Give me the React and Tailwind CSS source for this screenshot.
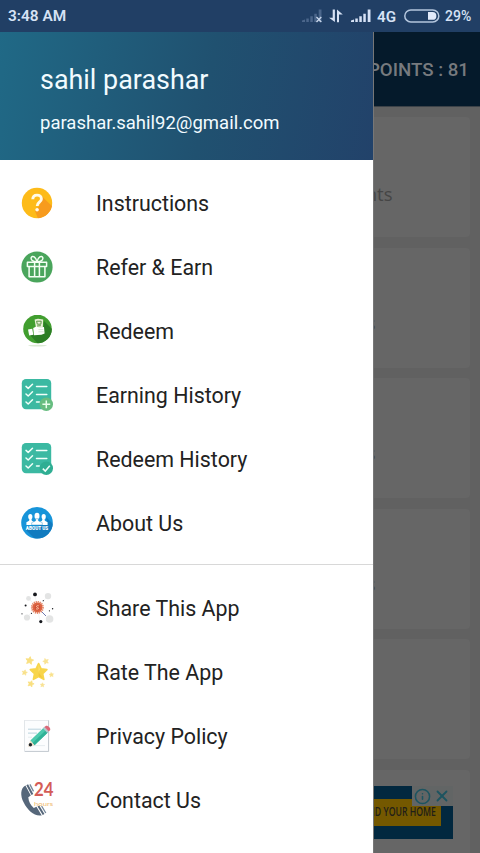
import { X, Info } from 'lucide-react'

function IconInstructions() {
  return (
    <svg viewBox="0 0 32 32" className="size-8">
      <defs>
        <clipPath id="help-disc">
          <circle cx="16" cy="16" r="15.2" />
        </clipPath>
      </defs>
      <circle cx="16" cy="16" r="15.2" fill="#fdbb19" />
      <path d="M20.5 9 34 22v12H18l-4-10 5-6z" fill="#f79b1e" clipPath="url(#help-disc)" />
      <path
        d="M11.8 12.3c0-2.6 1.8-4.2 4.3-4.2s4.3 1.5 4.3 3.8c0 3.3-4.2 3.3-4.2 7"
        fill="none"
        stroke="#fffbe8"
        strokeWidth="2.9"
      />
      <circle cx="16.1" cy="22.8" r="1.8" fill="#fffbe8" />
    </svg>
  )
}

function IconGift() {
  return (
    <svg viewBox="0 0 32 32" className="size-8">
      <circle cx="16" cy="16" r="15.6" fill="#4aa55c" />
      <g fill="none" stroke="#f4fff4" strokeWidth="1.5" strokeLinejoin="round">
        <path d="M6.4 11.2h19.2v4.4H6.4zM8.1 15.6h15.8v10.2H8.1zM13.6 11.2v14.6M18.4 11.2v14.6" />
        <path d="M16 11C12 10.8 9.3 9 10.2 6.5c1.2-2.4 4.9-.8 5.8 4.5zM16 11c4-.2 6.7-2 5.8-4.5-1.2-2.4-4.9-.8-5.8 4.5z" />
      </g>
    </svg>
  )
}

function IconRedeem() {
  return (
    <svg viewBox="0 0 32 32" className="size-8">
      <defs>
        <clipPath id="redeem-disc">
          <circle cx="16.5" cy="14" r="14.3" />
        </clipPath>
      </defs>
      <ellipse cx="16.5" cy="30.6" rx="9.5" ry="0.8" fill="#dce9d6" />
      <circle cx="16.5" cy="14" r="14.3" fill="#419e2f" />
      <path d="m23 6 10 10v14H18l-9-10 13-3z" fill="#2c7e25" clipPath="url(#redeem-disc)" />
      {/* banknotes */}
      <path d="m13.6 4.6 3.4-.8 5.2.8-.4 8-6.8.6z" fill="#e7f0d6" />
      <path d="M15.6 6.2h4.6l-.3 3h-3.6zM16 11l3.8-.3" fill="none" stroke="#5c9346" strokeWidth="1" />
      {/* fist and cuff */}
      <path d="m12.2 13 3.2-1.6 2.4 1 5.2-.4.6 6.4-3.2 1.4-7.4.4z" fill="#fff" />
      <path d="m7 14.6 4.2-.9 1.2 6-4.2.9z" fill="#fff" />
      <path d="M17.4 16.8h5.4M17.4 14.6h5" stroke="#b6ceb0" strokeWidth=".5" />
    </svg>
  )
}

function IconChecklist({ badge }) {
  return (
    <svg viewBox="0 0 32 32" className="size-8">
      <rect x="0.8" y="0" width="29.4" height="30.2" rx="4.2" fill="#3bb9a2" />
      <g fill="none" stroke="#f0fff9" strokeWidth="1.5" strokeLinecap="round" strokeLinejoin="round">
        <path d="m5 7.4 2.2 2 4.3-4.2M5 15l2.2 2 4.3-4.2M5 23l2.2 2 4.3-4.2M15.5 7.5h10.3M15.5 15.5h10.3M15.5 23h2.8" />
      </g>
      {badge === 'plus' ? (
        <>
          <circle cx="25.3" cy="25.3" r="6.7" fill="#67bd80" />
          <path d="M25.3 21.4v7.8M21.4 25.3h7.8" stroke="#eaffed" strokeWidth="1.5" />
        </>
      ) : (
        <>
          <circle cx="25.3" cy="25.3" r="6.7" fill="#2fae93" />
          <path d="m21.8 25.6 2.5 2.5 4.5-5.3" fill="none" stroke="#f0fff9" strokeWidth="1.5" />
        </>
      )}
    </svg>
  )
}

function IconAbout() {
  return (
    <svg viewBox="0 0 32 32" className="size-8">
      <defs>
        <clipPath id="about-disc">
          <circle cx="16" cy="15.8" r="15.8" />
        </clipPath>
      </defs>
      <circle cx="16" cy="15.8" r="15.8" fill="#1794d9" />
      <path d="m25 10 9 9v15H16L5 23l21-7z" fill="#117bbf" clipPath="url(#about-disc)" />
      <g fill="#fff">
        <ellipse cx="9.3" cy="9.8" rx="2.1" ry="2.7" />
        <ellipse cx="22.7" cy="9.8" rx="2.1" ry="2.7" />
        <path d="M5.4 18v-2.7l2.7-1.5.4-2h1.8l.6 2 2 1V18zM19 18v-3.2l2-1 .6-2h1.8l.5 2 2.7 1.5V18z" />
        <ellipse cx="16" cy="9" rx="2.5" ry="3.2" />
        <path d="M10.7 18v-2.3l4-2v-2h2.6v2l4 2V18z" stroke="#1487ca" strokeWidth=".4" />
      </g>
      <text
        x="16"
        y="23.4"
        textAnchor="middle"
        textLength="22.5"
        lengthAdjust="spacingAndGlyphs"
        fontFamily="Roboto, sans-serif"
        fontSize="5.3"
        fontWeight="900"
        fill="#fff"
      >
        ABOUT US
      </text>
    </svg>
  )
}

function IconShare() {
  return (
    <svg viewBox="0 0 32 32" className="size-8 overflow-visible">
      <g stroke="#e6e6e9" strokeWidth=".4">
        <path d="m16 15 10-10M16 15 5 26M16 15 8 7M16 15 14 3M16 15l3 14" />
      </g>
      <path d="m20 19 5 5" stroke="#6e78ad" strokeWidth="1" />
      <g fill="#e3e4e4">
        <circle cx="27" cy="4.1" r="3.2" />
        <circle cx="7.5" cy="6.4" r="2.4" />
        <circle cx="6" cy="25.5" r="3.1" />
        <circle cx="28.6" cy="27" r="3.8" />
      </g>
      <g fill="#16181d">
        <circle cx="14" cy="2.4" r="1.9" />
        <circle cx="19.8" cy="29.6" r="1.6" />
        <circle cx="4.6" cy="13.4" r="1" />
        <circle cx="1" cy="21.8" r=".6" />
        <circle cx="31.6" cy="16.8" r=".7" />
        <circle cx="28.4" cy="18.8" r=".6" />
        <circle cx="22.3" cy="8.7" r=".6" />
        <circle cx="10.5" cy="21.3" r=".6" />
      </g>
      <circle cx="16.4" cy="15.4" r="5.6" fill="none" stroke="#e58666" strokeWidth="1.8" strokeDasharray="1.2 .8" />
      <circle cx="16.4" cy="15.4" r="5" fill="#dd6543" />
      <circle cx="16.4" cy="15.4" r="2.9" fill="#cf4f35" />
      <path d="M17.8 13.9c-2.6-1-2.9 1.1-1.4 1.5 2 .5 1.4 2.3-1.4 1.4" fill="none" stroke="#ffc5a6" strokeWidth="1" />
    </svg>
  )
}

const STARS = [
  { x: 17.6, y: 16.2, s: 8.6, r: 0, fill: '#f8d54a' },
  { x: 8.6, y: 4.6, s: 4, r: 10, fill: '#f9df80' },
  { x: 24.8, y: 5.3, s: 3, r: -18, fill: '#f9e292' },
  { x: 3.6, y: 16.6, s: 2.8, r: 12, fill: '#f9e18a' },
  { x: 30.4, y: 18.8, s: 2.4, r: -8, fill: '#f9e18a' },
  { x: 9.8, y: 27.8, s: 3.3, r: 18, fill: '#f9df80' },
  { x: 21.4, y: 29, s: 2.3, r: 4, fill: '#f9e292' },
]

function IconStars() {
  return (
    <svg viewBox="0 0 32 32" className="size-8 overflow-visible">
      {STARS.map((star) => (
        <path
          key={`${star.x}-${star.y}`}
          d="m0-1 .29.62.67.08-.49.46.13.67L0 .5l-.6.33.13-.67-.49-.46.67-.08z"
          transform={`translate(${star.x} ${star.y}) rotate(${star.r}) scale(${star.s})`}
          fill={star.fill}
          stroke={star.fill}
          strokeWidth=".2"
          strokeLinejoin="round"
        />
      ))}
      <path d="m17.6 8.8 1.2 4.6-1.2 2.6z" fill="#fbe27a" />
      <path d="m17.6 16.6 4.4 5.6-4.4-1.9z" fill="#f2c73e" />
    </svg>
  )
}

function IconPolicy() {
  return (
    <svg viewBox="0 0 32 32" className="size-8">
      <path d="M3.5.3h24.2v31.2H3.5z" fill="#fcfdfe" stroke="#d6dbdf" strokeWidth=".7" />
      <path d="M27.5.5v30.9H4" fill="none" stroke="#b7bfc5" strokeWidth=".7" />
      <path d="M7 9.2h13M7 13.1h9" stroke="#a9c9d6" strokeWidth=".8" />
      <path d="M7 17.2h4M7 25.6h17" stroke="#dde5ea" strokeWidth=".7" />
      <path d="m9.3 20.6 13.6-13 4.2 4.6-13.6 13z" fill="#4cc9ad" />
      <path d="m11.6 23 13.5-13 2 2.2-13.6 13z" fill="#2fb297" />
      <path d="m22 8.3 1.6-1.5 4.3 4.5-1.6 1.6z" fill="#b5c6cd" />
      <path d="m23.4 7 1.3-1.1c1.9-.9 5.1 2 4.5 4l-1.4 1.5z" fill="#db6878" />
      <path d="m9.3 20.6-2.3 6.2 6.5-1.6z" fill="#f0dcc0" />
      <circle cx="9.4" cy="24.8" r="1.7" fill="#20262c" />
    </svg>
  )
}

function IconContact() {
  return (
    <svg viewBox="0 0 32 32" className="size-8 overflow-visible">
      <path
        d="M4.4 1.4C-.6 4-.9 11.600 2.700 18.600c4 8 10.800 14.200 18 12.800l-5.200-8.600-2.700 1.200C9.600 21.600 7.600 17.600 7.300 13.300L9.800 11.400z"
        fill="#56677a"
      />
      <path d="m6.200.8 5.200 9.600M17.400 22l5.200 8.600" stroke="#56677a" strokeWidth="2" />
      <path d="m8.900.4 3.600 7M20.600 22l4.200 7" stroke="#75879a" strokeWidth="1.300" />
      <text
        x="13"
        y="12.300"
        textLength="19.500"
        lengthAdjust="spacingAndGlyphs"
        fontFamily="Lato, sans-serif"
        fontSize="18"
        fontWeight="700"
        fill="#d45c57"
      >
        24
      </text>
      <text
        x="13"
        y="22"
        textLength="19"
        lengthAdjust="spacingAndGlyphs"
        fontFamily="Lato, sans-serif"
        fontSize="6"
        fill="#efb96c"
      >
        hours
      </text>
    </svg>
  )
}

const MAIN_ITEMS = [
  { label: 'Instructions', icon: <IconInstructions /> },
  { label: 'Refer & Earn', icon: <IconGift /> },
  { label: 'Redeem', icon: <IconRedeem /> },
  { label: 'Earning History', icon: <IconChecklist badge="plus" /> },
  { label: 'Redeem History', icon: <IconChecklist badge="check" /> },
  { label: 'About Us', icon: <IconAbout /> },
]

const MORE_ITEMS = [
  { label: 'Share This App', icon: <IconShare /> },
  { label: 'Rate The App', icon: <IconStars /> },
  { label: 'Privacy Policy', icon: <IconPolicy /> },
  { label: 'Contact Us', icon: <IconContact /> },
]

function SignalBars({ dim }) {
  return (
    <svg viewBox="0 0 21 14" className="h-3.5 w-[21px]">
      <path
        d="M0 13v-1.5l3-1V13zM4.3 13V9.5h2.5V13zM8.3 13V7.2h2.5V13zM12.3 13V4.7h2.5V13zM16.7 13V.5h2.8V13z"
        fill={dim ? '#4b668b' : '#d6e2f5'}
      />
      {dim && <path d="m14.5 8 4.8 5m0-5-4.8 5" stroke="#cbd9ed" strokeWidth="1.3" />}
    </svg>
  )
}

function StatusBar() {
  return (
    <div className="flex h-8 shrink-0 items-center bg-[#213f65] pr-[9px] pl-2 text-[#d6e2f5]">
      <span className="pt-[2px] text-[15.4px] font-semibold">3:48 AM</span>
      <div className="ml-auto flex items-center text-[15px] font-semibold">
        <SignalBars dim />
        <svg viewBox="0 0 14 14" className="ml-[6px] h-3.5 w-3.5" fill="#d6e2f5">
          <path d="M3.7.5h2.2V13L0 8.7h3.7zM8 13.3V.5l5.8 5H10v7.8z" />
        </svg>
        <span className="ml-[8px] flex">
          <SignalBars />
        </span>
        <span className="ml-[5px] w-[19px] pt-[2px] text-[15.2px]">4G</span>
        <svg viewBox="0 0 36 14" className="ml-[8px] h-3.5 w-9">
          <rect x=".8" y=".9" width="34" height="12" rx="6" fill="none" stroke="#b4c6dd" strokeWidth="1.5" />
          <path d="M24 3h4.5a3.9 3.9 0 0 1 0 7.8H24z" fill="#e1eafa" />
        </svg>
        <span className="ml-[5px] w-[26px] pt-px text-[14px] font-medium whitespace-nowrap">29%</span>
      </div>
    </div>
  )
}

function MenuItem({ label, icon }) {
  return (
    <button type="button" className="flex h-16 w-full items-center pl-[21px] text-left">
      {icon}
      <span className="ml-[43px] pt-[2px] text-[21.4px] leading-none text-[#222]">{label}</span>
    </button>
  )
}

function Drawer() {
  return (
    <aside className="absolute inset-y-0 left-0 flex w-[373px] flex-col bg-white shadow-[1px_0_0_#777]">
      <div className="flex h-32 shrink-0 flex-col bg-linear-[100deg,#206986,#205170_55%,#22426a] pt-[32px] pl-10 text-[#f2fbff]">
        <span className="text-[26.9px] leading-8">sahil parashar</span>
        <span className="mt-[15px] text-[18.5px] leading-6">parashar.sahil92@gmail.com</span>
      </div>
      <nav className="mt-[11px] flex flex-col">
        {MAIN_ITEMS.map((item) => (
          <MenuItem key={item.label} {...item} />
        ))}
      </nav>
      <div className="mt-[9px] h-px shrink-0 bg-[#d8d8d8]" />
      <nav className="mt-[11px] flex flex-col">
        {MORE_ITEMS.map((item) => (
          <MenuItem key={item.label} {...item} />
        ))}
      </nav>
    </aside>
  )
}

const CARDS = [
  { text: 'Earn Points', inset: 'pr-[77px] pt-[65px]' },
  { text: 'Points', inset: 'pr-[94px] pt-[63px]' },
  { text: 'Points', inset: 'pr-[94px] pt-[63px]' },
  { text: 'Points', inset: 'pr-[94px] pt-[63px]' },
  { text: '', inset: '' },
  { text: '', inset: '' },
]

// Page behind the open drawer, in its dimmed colours
function HomePage() {
  return (
    <div className="flex h-full flex-col bg-[#616161]">
      <header className="flex h-[75px] shrink-0 items-center justify-end border-b border-[#3c4248] bg-[#051a2b] pt-[3px] pr-[11px] text-[18.7px] font-medium text-[#777a7e]">
        POINTS : 81
      </header>
      <div className="flex flex-1 flex-col gap-[10.6px] overflow-hidden pt-[10px] pr-[10.5px] pl-[10.5px]">
        {CARDS.map((card, i) => (
          <div
            key={i}
            className={`h-[120px] shrink-0 rounded-[4px] bg-[#666] text-right font-['Open_Sans'] text-[18.5px] leading-6 text-[#454545] ${card.inset}`}
          >
            {card.text}
          </div>
        ))}
      </div>
    </div>
  )
}

function AdBanner() {
  return (
    <div className="absolute right-[27px] bottom-[14px] flex h-[53px] w-[427px] items-center justify-end bg-[#02283f] pr-3">
      <div className="flex h-[27px] w-[120px] items-center justify-end bg-[#745800] pr-[5px] font-['Open_Sans'] text-[12.6px] font-semibold text-[#211e18]">
        <span className="inline-block origin-right scale-x-[.69] whitespace-nowrap">FIND YOUR HOME</span>
      </div>
      <div className="absolute top-0 right-0 flex h-5 w-[41px] items-center justify-between bg-[#626565] px-[2px] text-[#1d5460]">
        <Info size={17} strokeWidth={2.2} />
        <X size={18} strokeWidth={2.4} />
      </div>
    </div>
  )
}

export default function App() {
  return (
    <div className="flex h-[853px] w-[480px] flex-col overflow-hidden font-[Roboto,sans-serif]">
      <StatusBar />
      <main className="relative min-h-0 flex-1">
        <HomePage />
        <AdBanner />
        <Drawer />
      </main>
    </div>
  )
}
